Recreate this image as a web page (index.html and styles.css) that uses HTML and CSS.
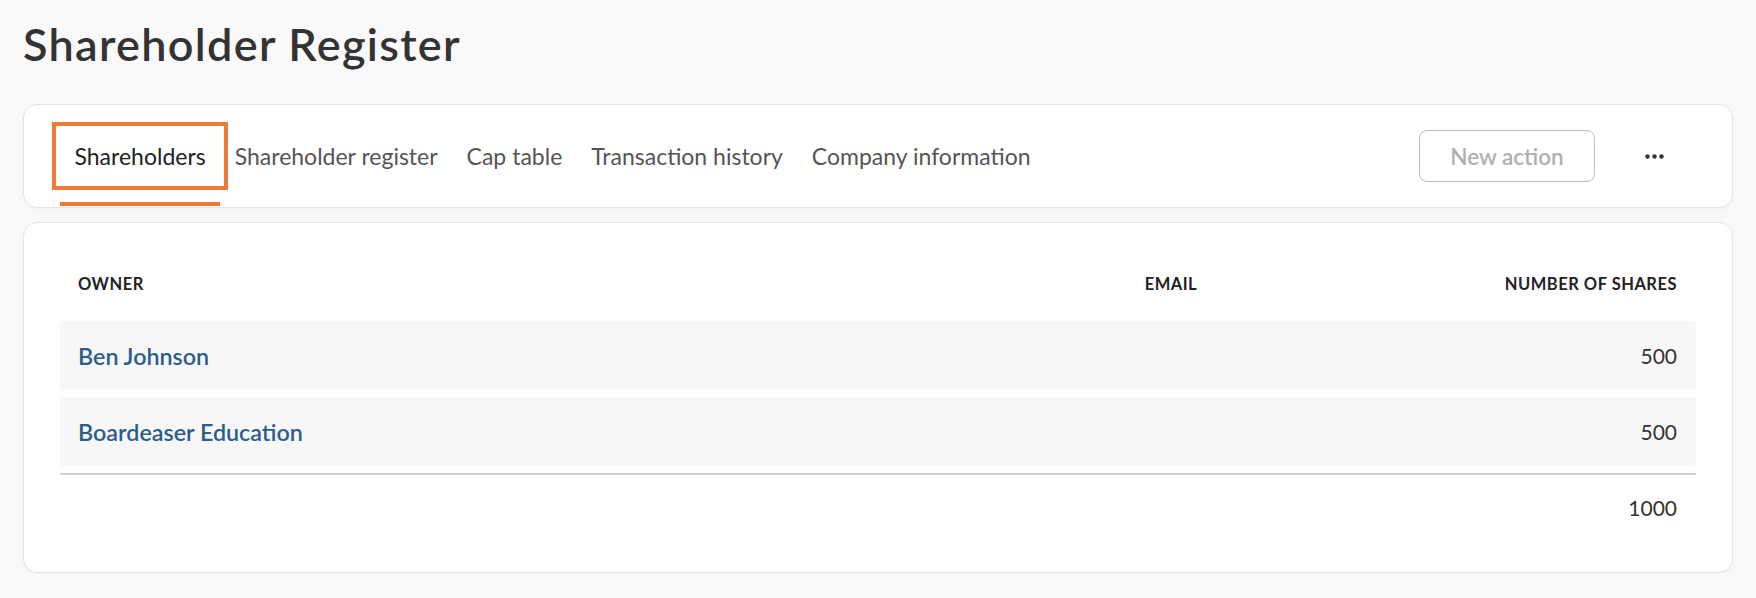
FILE: index.html
```html
<!DOCTYPE html>
<html lang="en">
<head>
    <meta charset="UTF-8">
    <meta name="viewport" content="width=device-width, initial-scale=1.0">
    <title>Shareholder Register</title>
    <link rel="stylesheet" href="styles.css">
</head>
<body>

    <div class="page">
        <h1 class="page-title">Shareholder Register</h1>

        <!-- Tabs -->
        <div class="card tabs-card">
            <nav class="tabs">
                <a class="tab active" href="#">Shareholders</a>
                <a class="tab" href="#">Shareholder register</a>
                <a class="tab" href="#">Cap table</a>
                <a class="tab" href="#">Transaction history</a>
                <a class="tab" href="#">Company information</a>
            </nav>
            <div class="tab-actions">
                <button class="btn-outline" disabled>New action</button>
                <button class="btn-more" aria-label="More">
                    <svg width="19" height="5" viewBox="0 0 19 5">
                        <circle cx="2.5" cy="2.5" r="2.2" fill="#333"/>
                        <circle cx="9.5" cy="2.5" r="2.2" fill="#333"/>
                        <circle cx="16.5" cy="2.5" r="2.2" fill="#333"/>
                    </svg>
                </button>
            </div>
        </div>

        <!-- Shareholders table -->
        <div class="card table-card">
            <div class="table">
                <div class="table-head">
                    <div class="cell">Owner</div>
                    <div class="cell">Email</div>
                    <div class="cell num">Number of shares</div>
                </div>
                <div class="table-row">
                    <div class="cell"><a class="owner-link" href="#">Ben Johnson</a></div>
                    <div class="cell"></div>
                    <div class="cell num">500</div>
                </div>
                <div class="table-row">
                    <div class="cell"><a class="owner-link" href="#">Boardeaser Education</a></div>
                    <div class="cell"></div>
                    <div class="cell num">500</div>
                </div>
                <div class="table-total">
                    <div class="cell"></div>
                    <div class="cell"></div>
                    <div class="cell num">1000</div>
                </div>
            </div>
        </div>
    </div>

</body>
</html>
```

FILE: styles.css
```css
* {
    margin: 0;
    padding: 0;
    box-sizing: border-box;
}

body {
    background: #f9f9f9;
    font-family: 'Lato', 'Noto Sans', sans-serif;
    color: #333;
}

.page {
    padding: 16px 23px 0 23px;
}

.page-title {
    font-size: 45px;
    font-weight: 600;
    letter-spacing: 1.3px;
    color: #333;
    line-height: 56px;
    margin-bottom: 32px;
}

.card {
    background: white;
    border: 1px solid #e4e4e4;
    border-radius: 14px;
    box-shadow: 0px 2px 6px rgba(0, 0, 0, 0.03);
}

/* Tabs */
.tabs-card {
    height: 104px;
    display: flex;
    justify-content: space-between;
    padding: 0 68px 0 36px;
    margin-bottom: 14px;
}

.tabs {
    display: flex;
}

.tab {
    position: relative;
    display: flex;
    align-items: center;
    padding: 0 14.5px;
    font-size: 23px;
    color: #555;
    text-decoration: none;
}

.tab.active {
    color: #222;
}

.tab.active::before {
    content: "";
    position: absolute;
    top: 17px;
    bottom: 17px;
    left: -8px;
    right: -8px;
    border: 4px solid #ef7a35;
}

.tab.active::after {
    content: "";
    position: absolute;
    left: 0;
    right: 0;
    bottom: 1px;
    height: 4px;
    background: #ef7a35;
}

.tab-actions {
    display: flex;
    align-items: center;
    gap: 50px;
}

.btn-outline {
    width: 176px;
    height: 52px;
    border: 1px solid #bdbdbd;
    border-radius: 8px;
    background: white;
    font-family: inherit;
    font-size: 22.5px;
    font-weight: 600;
    color: #afafaf;
}

.btn-more {
    border: none;
    background: none;
    display: flex;
    align-items: center;
}

/* Table */
.table-card {
    padding: 36px 36px 32px 36px;
}

.table-head, .table-row, .table-total {
    display: grid;
    grid-template-columns: 65.2% 1fr auto;
    align-items: center;
}

.table-head {
    height: 50px;
    margin-bottom: 12px;
    font-size: 16.5px;
    font-weight: 700;
    text-transform: uppercase;
    letter-spacing: 0.5px;
    color: #222;
}

.table-row {
    height: 69px;
    background: #f7f7f7;
    border-radius: 3px;
    margin-bottom: 7px;
    font-size: 21px;
}

.table-total {
    height: 67px;
    border-top: 2px solid #d2d2d2;
    font-size: 21px;
}

.cell {
    padding: 0 19px 0 18px;
}

.cell.num {
    text-align: right;
}

.owner-link {
    color: #2d5d8b;
    font-size: 23.3px;
    font-weight: 600;
    text-decoration: none;
}
```
